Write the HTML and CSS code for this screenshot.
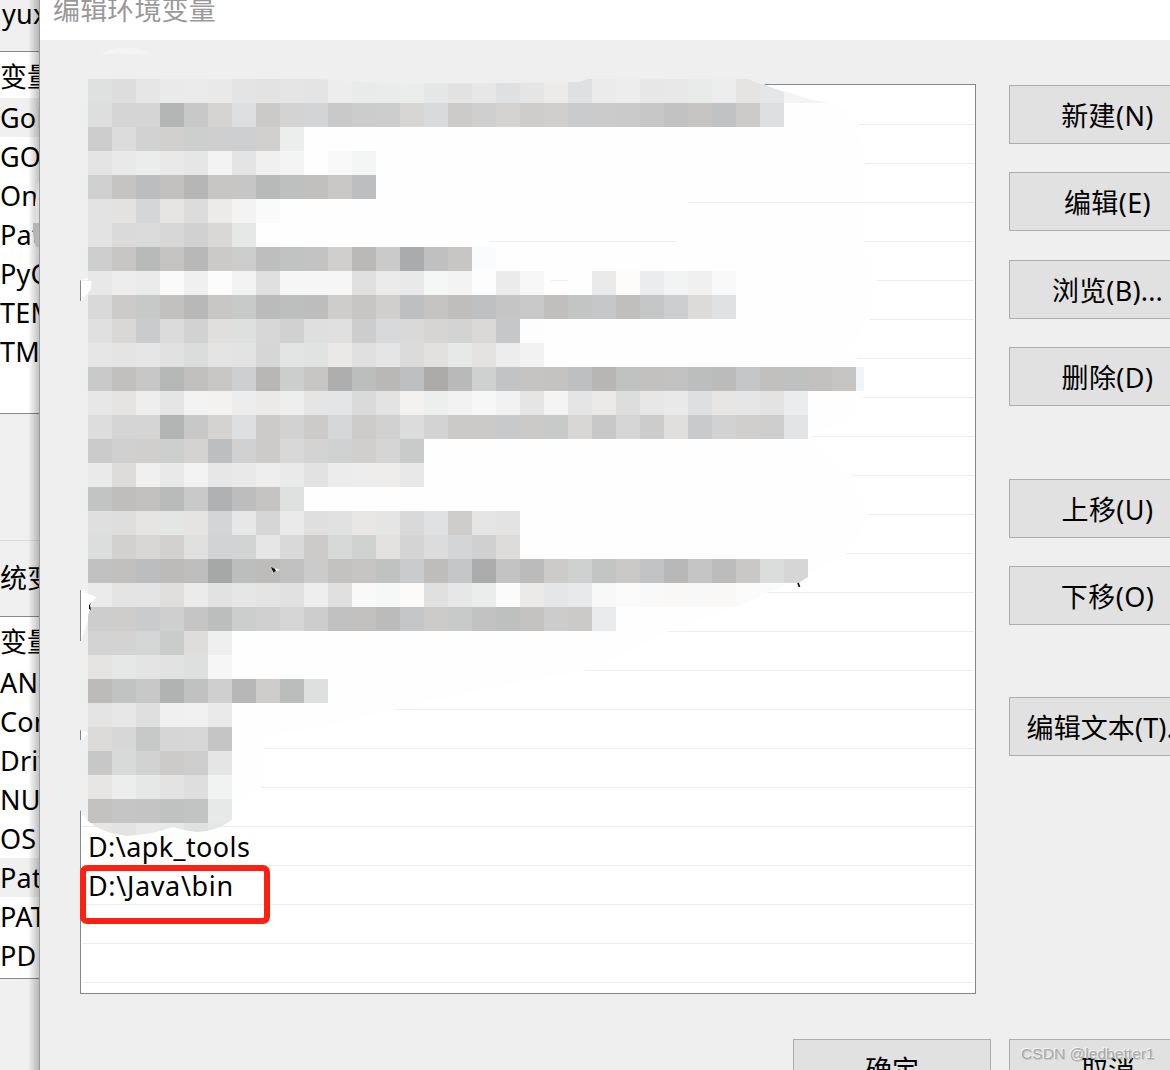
FILE: index.html
```html
<!DOCTYPE html>
<html lang="zh-CN">
<head>
<meta charset="utf-8">
<title>编辑环境变量</title>
<link rel="stylesheet" href="styles.css">
</head>
<body>
<div class="screen">
  <aside class="parent">
    <div class="user">yux</div>
    <div class="vars vars-user">
      <div class="head">变量</div>
      <div class="var selected">GoL</div>
      <div class="var">GOR</div>
      <div class="var">On</div>
      <div class="var">Pat</div>
      <div class="var">PyC</div>
      <div class="var">TEM</div>
      <div class="var">TM</div>
    </div>
    <div class="group-gap"></div>
    <div class="group">统变</div>
    <div class="vars vars-system">
      <div class="head">变量</div>
      <div class="var">AN</div>
      <div class="var">Com</div>
      <div class="var">Driv</div>
      <div class="var">NU</div>
      <div class="var">OS</div>
      <div class="var selected">Pat</div>
      <div class="var">PAT</div>
      <div class="var">PD</div>
    </div>
  </aside>
  <main class="dialog">
    <header class="title">编辑环境变量</header>
    <div class="content">
      <div class="list" id="list"></div>
      <div class="actions">
        <button class="btn">新建(N)</button>
        <button class="btn">编辑(E)</button>
        <button class="btn browse">浏览(B)...</button>
        <button class="btn">删除(D)</button>
        <button class="btn group-start">上移(U)</button>
        <button class="btn">下移(O)</button>
        <button class="btn text-edit">编辑文本(T)...</button>
      </div>
    </div>
    <footer class="footer">
      <button class="btn">确定</button>
      <button class="btn">取消</button>
    </footer>
  </main>
  <svg class="mosaic" id="mosaic" width="1170" height="1070" viewBox="0 0 1170 1070">
    <defs>
      <clipPath id="brush">
        <path d="M88 79H320L360 82L410 83.500H480L580 82L588 79H748L757 83L765 85L784 92L830 103H880V583H799L768 592L735 607H640V820H232Q215 832 197 832Q184 831 173 827Q150 835 127 836Q103 834 88 821V616L92 600L96 597L88 594Z"/>
      </clipPath>
    </defs>
    <path fill="#efefef" d="M70 84H88V278L80 280.500H70ZM70 301H81L91 290V592L81 590H70ZM70 641H81L89 618V733L80 730H70ZM70 740H81L88 734V822L80 810H70Z"/>
    <path fill="#edefef" d="M80 103h8v24h-8zM80 175h8v24h-8zM80 247h8v24h-8zM80 367h8v24h-8zM80 487h8v24h-8zM80 679h8v24h-8zM80 751h8v24h-8z"/>
    <path fill="#fefefe" d="M88 85H765L784 91L830 103L848 110L859 125L866 164L864 242L875 270L877 280L870 319L849 348L857 358L864 375L863 397L850 419L812 437L834 463L853 476L868 514L860 534L844 554L808 575L768 592L740 606L670 631L587 670L470 692L397 709L318 728L270 736L265 748L262 787L232 807V790H88Z"/>
    <path fill="#f4f4f4" d="M784 91L808 99L830 103H784Z"/>
    <path fill="#f4f4f4" d="M100 54Q125 41 151 54Z"/>
    <path fill="#efefef" d="M88 79H748L765 84.500V86H88Z"/>
    <g id="cells" clip-path="url(#brush)"></g>
    <path stroke="#eee" d="M688 202.500H866M489 241.500H676M551 280.500H568"/>
    <path fill="#fff" d="M81 281H91.500L90.500 290L81 301ZM81 591L96 597L91 605L82 635H81Z"/>
    <path fill="#b5b5b5" d="M39 223H33V232Q34 242 36 247H39Z"/>
    <path fill="#dedede" d="M39 180Q34 200 34 223H39ZM36 247Q38 253 39 254Z"/>
    <path fill="#fff" d="M799 583L808 577V583Z"/>
    <path fill="#111" d="M92 602L89 605V609L91 610L90 605ZM271 567L275 569L276 571L272 573Z"/>
    <path fill="#fff" d="M271 567L273 572L272 574ZM275 568L280 570L276 571Z"/>
    <path stroke="#111" stroke-width="1.800" d="M798 583L799.500 587"/>
  </svg>
  <div class="marker"></div>
  <div class="watermark">CSDN @ledbetter1</div>
</div>
<script src="main.js"></script>
</body>
</html>
```
FILE: styles.css
```css
* { box-sizing: border-box; }
body {
  margin: 0;
  overflow: hidden;
  background: #f0f0f0;
  color: #000;
  font: 27px/39px "Noto Sans", "Noto Sans CJK SC", sans-serif;
}
.screen {
  position: relative;
  display: flex;
  width: 1170px;
  height: 1070px;
  overflow: hidden;
}
.parent {
  position: relative;
  width: 39px;
  flex: none;
  overflow: hidden;
  white-space: nowrap;
}
.parent::after {
  content: "";
  position: absolute;
  inset: 0 0 0 auto;
  width: 11px;
  background: linear-gradient(to right, rgba(0, 0, 0, 0), rgba(0, 0, 0, .24));
}
.user { height: 51px; padding-left: 2px; line-height: 27px; letter-spacing: .3px; }
.vars {
  background: #fff;
  border-top: 1px solid #828790;
  border-bottom: 1px solid #828790;
}
.vars-user { height: 363px; }
.vars-system { height: 363px; }
.head { height: 46px; line-height: 50px; }
.vars-system .head { line-height: 49px; }
.var { height: 39px; line-height: 40px; letter-spacing: .2px; }
.selected { background: #f0f0f0; }
.group-gap { height: 127px; border-bottom: 1px solid #dcdcdc; }
.group { height: 75px; line-height: 73px; }

.dialog {
  flex: 1;
  min-width: 0;
  display: flex;
  flex-direction: column;
  background: #efefef;
  border-left: 1px solid #9c9c9c;
}
.title {
  flex: none;
  height: 40px;
  padding-left: 13px;
  line-height: 19px;
  letter-spacing: .15px;
  color: #999;
  background: #fff;
}
.content {
  display: flex;
  gap: 33px;
  padding: 44px 0 0 40px;
}
.list {
  flex: none;
  width: 896px;
  height: 910px;
  padding: 1px 1px 0;
  background: #fff;
  border: 1px solid #828790;
  overflow: hidden;
}
.entry {
  height: 39px;
  padding-left: 6px;
  border-bottom: 1px solid #eee;
  line-height: 40px;
  letter-spacing: .4px;
}
.entry.path-java { letter-spacing: .65px; }
.actions {
  display: flex;
  flex-direction: column;
  gap: 28px;
  padding-top: 1px;
}
.btn {
  flex: none;
  width: 198px;
  height: 59px;
  padding: 0;
  border: 1px solid #adadad;
  background: #e1e1e1;
  color: #000;
  font: inherit;
  line-height: 59px;
  letter-spacing: .4px;
  text-indent: -1px;
  white-space: nowrap;
}
.browse { margin-top: 1px; letter-spacing: .2px; }
.group-start { margin-top: 45px; }
.text-edit { margin-top: 44px; letter-spacing: .1px; }
.footer {
  display: flex;
  flex: none;
  gap: 18px;
  padding: 45px 0 0 753px;
}
.footer .btn { text-indent: 0; letter-spacing: 0; }
.mosaic {
  position: absolute;
  inset: 0;
  pointer-events: none;
}
.marker {
  position: absolute;
  left: 80px;
  top: 865px;
  width: 190px;
  height: 59px;
  border: 6px solid #ff2012;
  border-radius: 7px;
}
.watermark {
  position: absolute;
  left: 1021px;
  top: 1044px;
  font: 15.5px/20px "Liberation Sans", sans-serif;
  letter-spacing: .05px;
  color: #aaa;
  text-shadow: -1px -1px 0 #f4f4f4, 1px 1px 0 rgba(138, 138, 138, .3);
  white-space: nowrap;
}
```
FILE: main.js
```js
// List rows: only the last two filled entries are readable.
const list = document.getElementById("list");
for (let i = 0; i < 23; i++) {
  const row = document.createElement("div");
  row.className = i === 20 ? "entry path-java" : "entry";
  row.textContent = { 19: "D:\\apk_tools", 20: "D:\\Java\\bin" }[i] || "";
  list.appendChild(row);
}

// Redaction blocks: brightness plus an optional tint
// (g green, b blue, w warm, r rose), 24px cells.
const rows = [
  "e0g dd e6 ea eb e9 e4 e3 e5 e4 ed eag ebg ecg e6g e2 e7 e0b e5 ebw e0b eb ed e7 e8 eag ed e4w e6b",
  "de d5 d5 b5g c8 d4w dfb caw d3 d4b c9 cc cd d6w dab cbw cf d3w cdw cfw cbb cb ca c7 c2 c5w c2b cbw dfb",
  "cd dc d2 d0r ceg cf cfb d0w edg",
  "e4 e9 ecg e9 e6 f3 e4 f0 f4 fe f9 f5g",
  "d0 c4w bdb c1w b6 c6w c6 b9g bfg c0w c8w beb",
  "e3 e2w d6b e5w dc ebw f3 fa",
  "e3 da db d7 d1 d8w e7g",
  "ce c6w b9g c4w b8 caw cd be c2g c3 cfw b9w ca abb c0 c6w fbb",
  "e8 ed eb fa f0 fc f3 e0 f6 f6 f6 e0 eb e9 f6g f3 fd eb f7 fe fe ea fcw ecb f3g f0 f9",
  "d9 cbw c8g c1w b8 c7w c9g bb beg bd cdw c6w cfw bfb c4w bew c0b c5 c9 bfw c4g c7b bfw c6g ceb dbw e1b",
  "e0 d8w cbb db d2 dfw dfg d7 d1 df e0 cd d9b d9 d5w d3 d9w c7b fd",
  "e6 e4 e6 e1 dcg e4 e3 d6 e4g e2g e9w e0 e5 db e1w e8g e3r ed f2",
  "c9 c0w c7 b7g c0r c7w cfb b7w cdg c6r ae bdg b8r bfb abw b9 d0g c3b c4w c3r bfb b6w c1g c1w c2 bdg bb c6b c0w c0g c1w c5r",
  "e7 e4w ee e5 f3 f2w ed eaw ee e5 e5b da e3 f2w eeg f2 f7 f2 e5 f4 e5 eaw dd e7 e9 dfb e6w e6 e3 ecb",
  "dd d5 d5 b4g c8 d3w dfb cbw d2 cbw d7b ccw d1 dc d3 caw caw c9b caw c9g d7w c8 d6 cc dfw cab d2 cfw ce e4b",
  "cb d0 cfw ceg d3w beb d1 cbw d8 d3 d1g cfw d5 cag",
  "ea dcw f0 e9 f3 e7 e9 ee ea e2 ec ed edw e8",
  "c3g bew c1w bag c9 b1b bd c4w e0g",
  "df de e5w e5g e4w d5b e7 d6 ea df e1 e7w e5 d9 e1b cdw e5 e3",
  "ddg d1w d7w d1w e0 d3b d3g e6 d9 cbw d8g d1g e2w d4 dc d5b d0 dcw",
  "c1 c0r bdb bbw be a7g bdg bcw c1 cb c2r c5w c1g cbb bdw c6b ac c3 bb cbw d0g c4g c9r c3b b8 c5 bc c8r dcg d6",
  "eb e4 e4 dfw eb e2 e6 e4 e1 ee e0 f9 f7g fbw e0 e7 ecg fb eaw e6b e9b f8 fb f9 f8w f8 f8w fb fb",
  "cd cdw cbb cf c5 bdg cdg d0 d6 cd c1 c1w bb c6b cbw c9g c2 bfg c3w cc car ebb",
  "d3 d3 d6g cbg ddw ef",
  "e4w e7g e4 e2 dfg f6",
  "bbw c2g c8 b2g c1 cf b7 cdw bcg dfg",
  "e4 e7 df f0 f1 ea",
  "dbw d7 c8g d6 d7 c5",
  "c7 d9g d2 cbr ce e5",
  "e6w ed e7g e3 de f2g",
  "c2w c5 c4 c1g c3g e8g",
  "e6 e3 e9 e8 e0 e6"
];
const tint = { g: [-1, 1, 0], b: [-1, 0, 2], w: [1, 0, -2], r: [2, 0, -1] };
const cells = document.getElementById("cells");
function addCell(x, y, w, fill) {
  const r = document.createElementNS("http://www.w3.org/2000/svg", "rect");
  r.setAttribute("x", x);
  r.setAttribute("y", y);
  r.setAttribute("width", w);
  r.setAttribute("height", 24);
  r.setAttribute("fill", fill);
  cells.appendChild(r);
}
rows.forEach((line, j) => {
  line.split(" ").forEach((code, i) => {
    const v = parseInt(code.slice(0, 2), 16);
    const t = tint[code[2]] || [0, 0, 0];
    addCell(88 + 24 * i, 79 + 24 * j, 24, `rgb(${t.map(d => v + d).join(",")})`);
  });
});
addCell(856, 367, 8, "#f1f5f8");
```
